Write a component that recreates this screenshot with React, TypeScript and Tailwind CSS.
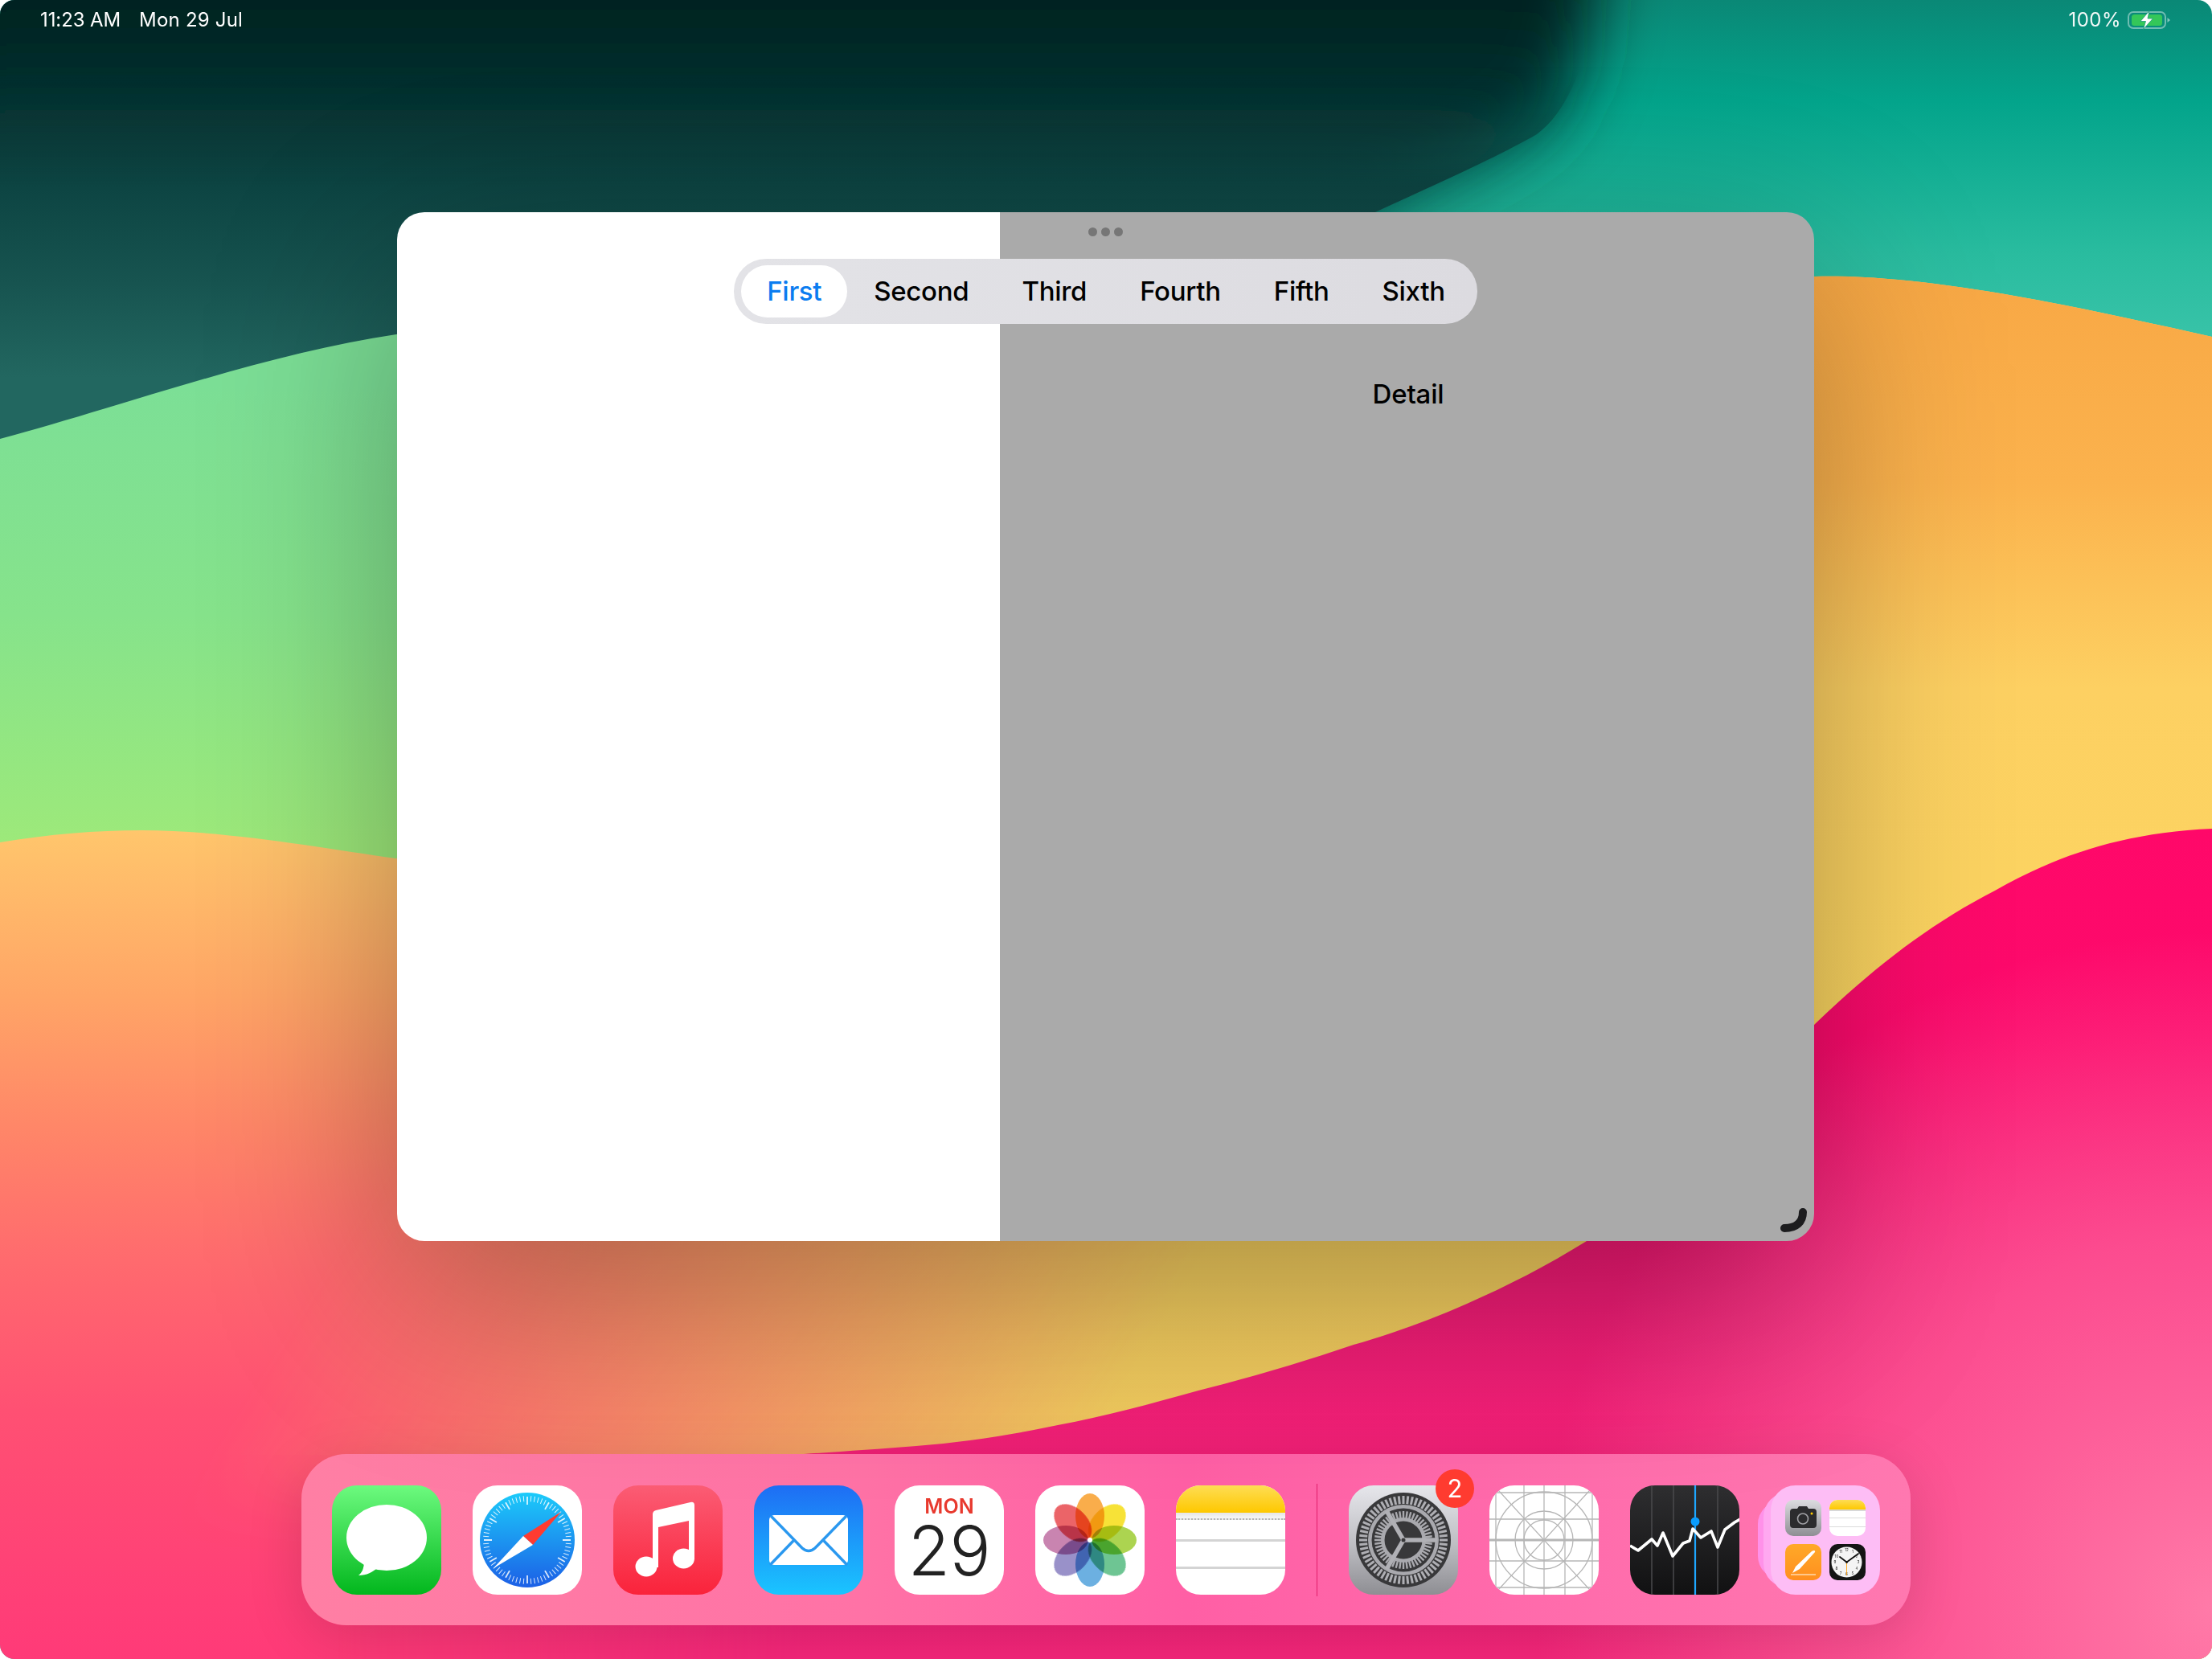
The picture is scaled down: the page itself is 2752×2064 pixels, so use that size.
import type { ReactNode } from "react";

const font = "font-['Inter','Noto_Sans',sans-serif]";
const tabs = ["First", "Second", "Third", "Fourth", "Fifth", "Sixth"];

const darkShape = "M-100 -100H1995C1988 40 1962 130 1912 167C1860 197 1780 232 1711 264L1500 500L-100 700Z";
const hillShape =
  "M0 1048C60 1038 120 1033 176 1033C280 1033 400 1055 493 1068L1500 700L2000 400L2258 344C2400 340 2600 385 2752 419V2064H0Z";
const pinkShape =
  "M2752 1031C2640 1036 2560 1064 2482 1108C2400 1150 2330 1205 2258 1274C2170 1380 2060 1490 1974 1544C1924 1575 1875 1600 1825 1622C1780 1642 1730 1660 1684 1673C1620 1695 1555 1714 1491 1730C1430 1747 1375 1762 1316 1773C1260 1785 1200 1794 1140 1799C1090 1803 1045 1806 1000 1809C800 1830 600 1850 400 1900V2064H2752Z";

function Wallpaper() {
  return (
    <svg className="absolute inset-0" width="2752" height="2064" viewBox="0 0 2752 2064">
      <defs>
        <linearGradient id="teal" x1="0" y1="0" x2="0" y2="420" gradientUnits="userSpaceOnUse">
          <stop offset="0" stopColor="#0a8876" />
          <stop offset="0.3" stopColor="#03a48b" />
          <stop offset="0.75" stopColor="#29bc9f" />
          <stop offset="1" stopColor="#38c3a8" />
        </linearGradient>
        <linearGradient id="dark" x1="0" y1="0" x2="0" y2="470" gradientUnits="userSpaceOnUse">
          <stop offset="0" stopColor="#02211f" />
          <stop offset="0.25" stopColor="#05302f" />
          <stop offset="0.5" stopColor="#0d4543" />
          <stop offset="0.75" stopColor="#175450" />
          <stop offset="1" stopColor="#226760" />
        </linearGradient>
        <linearGradient id="darkFade" x1="0" y1="90" x2="0" y2="230" gradientUnits="userSpaceOnUse">
          <stop offset="0" stopColor="#000" />
          <stop offset="1" stopColor="#fff" />
        </linearGradient>
        <mask id="sharpEdge" maskUnits="userSpaceOnUse" x="0" y="0" width="2752" height="700">
          <rect width="2752" height="700" fill="url(#darkFade)" />
        </mask>
        <filter id="soft" x="-10%" y="-10%" width="120%" height="120%">
          <feGaussianBlur stdDeviation="40" />
        </filter>
        <linearGradient id="green" x1="0" y1="480" x2="0" y2="1050" gradientUnits="userSpaceOnUse">
          <stop offset="0" stopColor="#7cdf96" />
          <stop offset="0.5" stopColor="#86e38b" />
          <stop offset="1" stopColor="#9de97a" />
        </linearGradient>
        <linearGradient id="hillLeft" x1="0" y1="1033" x2="0" y2="2064" gradientUnits="userSpaceOnUse">
          <stop offset="0" stopColor="#ffc66c" />
          <stop offset="0.2" stopColor="#ffa566" />
          <stop offset="0.36" stopColor="#ff8668" />
          <stop offset="0.52" stopColor="#ff6a6e" />
          <stop offset="0.7" stopColor="#ff5073" />
          <stop offset="1" stopColor="#ff3a78" />
        </linearGradient>
        <linearGradient id="hillRight" x1="0" y1="344" x2="0" y2="1850" gradientUnits="userSpaceOnUse">
          <stop offset="0" stopColor="#f8a845" />
          <stop offset="0.17" stopColor="#fbb24d" />
          <stop offset="0.34" stopColor="#fdd062" />
          <stop offset="0.65" stopColor="#fbd660" />
          <stop offset="1" stopColor="#f0c85e" />
        </linearGradient>
        <linearGradient id="hillFade" x1="440" y1="1280" x2="1330" y2="1830" gradientUnits="userSpaceOnUse">
          <stop offset="0.12" stopColor="#000" />
          <stop offset="1" stopColor="#fff" />
        </linearGradient>
        <mask id="hillMask" maskUnits="userSpaceOnUse" x="0" y="0" width="2752" height="2064">
          <rect width="2752" height="2064" fill="url(#hillFade)" />
          <rect x="-200" y="1850" width="1250" height="400" fill="#000" filter="url(#soft)" />
        </mask>
        <linearGradient id="pink" x1="0" y1="1031" x2="0" y2="2064" gradientUnits="userSpaceOnUse">
          <stop offset="0" stopColor="#ff0869" />
          <stop offset="0.25" stopColor="#fc0a6c" />
          <stop offset="0.55" stopColor="#f31c76" />
          <stop offset="1" stopColor="#f5267a" />
        </linearGradient>
        <radialGradient id="pinkGlow" cx="2752" cy="2000" r="840" gradientUnits="userSpaceOnUse">
          <stop offset="0" stopColor="#ff7aa8" />
          <stop offset="0.55" stopColor="#ff5c98" stopOpacity="0.75" />
          <stop offset="1" stopColor="#ff5c98" stopOpacity="0" />
        </radialGradient>
        <linearGradient id="pinkFade" x1="420" y1="0" x2="1000" y2="0" gradientUnits="userSpaceOnUse">
          <stop offset="0" stopColor="#000" />
          <stop offset="1" stopColor="#fff" />
        </linearGradient>
        <mask id="pinkMask" maskUnits="userSpaceOnUse" x="0" y="0" width="2752" height="2064">
          <rect width="2752" height="2064" fill="url(#pinkFade)" />
        </mask>
      </defs>
      <rect width="2752" height="2064" fill="url(#teal)" />
      <path d={darkShape} fill="url(#dark)" filter="url(#soft)" />
      <path d={darkShape} fill="url(#dark)" mask="url(#sharpEdge)" />
      <path d="M0 546C150 506 330 440 493 416C800 380 1300 340 1700 320V1300H0Z" fill="url(#green)" />
      <path d={hillShape} fill="url(#hillLeft)" />
      <path d={hillShape} fill="url(#hillRight)" mask="url(#hillMask)" />
      <g mask="url(#pinkMask)">
        <path d={pinkShape} fill="url(#pink)" />
        <path d={pinkShape} fill="url(#pinkGlow)" />
      </g>
    </svg>
  );
}

function StatusBar() {
  return (
    <div className={`flex items-center justify-between h-[46px] pt-[3px] pl-[50px] pr-[51px] text-[24px] leading-[43px] text-white ${font}`}>
      <div className="flex gap-[23px]">
        <span className="tracking-[-0.1px]">11:23 AM</span>
        <span className="tracking-[0.2px]">Mon 29 Jul</span>
      </div>
      <div className="flex items-center gap-[8px]">
        <span className="tracking-[0.5px] opacity-95">100%</span>
        <svg width="54" height="24" viewBox="0 0 54 24">
          <rect x="1" y="2" width="46" height="20" rx="6" fill="none" stroke="#fff" strokeOpacity="0.42" strokeWidth="2" />
          <rect x="5" y="5" width="38" height="14" rx="3.5" fill="#34c759" />
          <path d="M49.5 9L53 12L49.5 15Z" fill="#fff" fillOpacity="0.5" />
          <path d="M27 0.5L16 13.5H22.5L19.5 23.5L31.5 10H25Z" fill="#fff" stroke="#1d9a7a" strokeWidth="0.8" />
        </svg>
      </div>
    </div>
  );
}

function AppWindow() {
  return (
    <div className="relative flex ml-[494px] mt-[218px] w-[1763px] h-[1280px] rounded-[34px] overflow-hidden shadow-[0_70px_240px_rgba(0,0,0,0.32)]">
      <div className="w-[750px] bg-white" />
      <div className="flex-1 flex justify-center bg-[#aaaaaa] pt-[204px] pl-[3px]">
        <span className={`text-[33px] leading-[44px] tracking-[-0.2px] font-medium text-black ${font}`}>Detail</span>
      </div>
      <div className="absolute inset-x-0 top-[19px] flex justify-center gap-[5px]">
        <div className="w-[11px] h-[11px] rounded-full bg-[#767676]" />
        <div className="w-[11px] h-[11px] rounded-full bg-[#767676]" />
        <div className="w-[11px] h-[11px] rounded-full bg-[#767676]" />
      </div>
      <div className="absolute inset-x-0 top-[58px] flex justify-center">
        <div className={`flex items-center h-[81px] pl-[9px] pr-[7px] rounded-[40px] bg-[linear-gradient(90deg,#e3e3e7,#dcdbe0)] ${font}`}>
          {tabs.map((t, i) => (
            <div
              key={t}
              className={
                i === 0
                  ? "h-[65px] px-[32px] flex items-center rounded-[33px] bg-white text-[33px] tracking-[-0.3px] font-medium text-[#0a7cf0]"
                  : "h-[65px] px-[33px] flex items-center text-[33px] tracking-[-0.3px] font-medium text-black"
              }
            >
              {t}
            </div>
          ))}
        </div>
      </div>
      <svg className="absolute right-0 bottom-0" width="50" height="50" viewBox="0 0 50 50">
        <path d="M36 14C36 26 28 34 13 34" fill="none" stroke="#1c1c1e" strokeWidth="10" strokeLinecap="round" />
      </svg>
    </div>
  );
}

function Icon({ className, children }: { className: string; children: ReactNode }) {
  return <div className={`relative w-[136px] h-[136px] shrink-0 rounded-[31px] overflow-hidden ${className}`}>{children}</div>;
}

function Messages() {
  return (
    <Icon className="bg-[linear-gradient(180deg,#6dfa7f,#02b71d)]">
      <svg width="136" height="136" viewBox="0 0 136 136">
        <ellipse cx="68" cy="65" rx="50" ry="41" fill="#fff" />
        <path d="M40 94C40 104 37 109 33 112C43 112 51 108 57 102Z" fill="#fff" />
      </svg>
    </Icon>
  );
}

function Safari() {
  const ticks = Array.from({ length: 72 }, (_, i) => i * 5);
  return (
    <Icon className="bg-white">
      <svg width="136" height="136" viewBox="0 0 136 136">
        <defs>
          <linearGradient id="safariBg" x1="0" y1="0" x2="0" y2="1">
            <stop offset="0" stopColor="#1ccbfa" />
            <stop offset="1" stopColor="#1c5fe6" />
          </linearGradient>
        </defs>
        <circle cx="68" cy="68" r="59" fill="url(#safariBg)" />
        {ticks.map((a) => (
          <line
            key={a}
            x1="68"
            y1={a % 30 === 0 ? 14 : 13}
            x2="68"
            y2={a % 30 === 0 ? 24 : 20}
            stroke="#fff"
            strokeOpacity="0.85"
            strokeWidth={a % 30 === 0 ? 1.8 : 1}
            transform={`rotate(${a} 68 68)`}
          />
        ))}
        <path d="M110 33L75 74L63 63Z" fill="#ff3b30" />
        <path d="M26 103L63 63L75 74Z" fill="#fff" />
      </svg>
    </Icon>
  );
}

function Music() {
  return (
    <Icon className="bg-[linear-gradient(180deg,#fb5c74,#fa233b)]">
      <svg width="136" height="136" viewBox="0 0 136 136" fill="#fff">
        <path d="M49 36Q49 32 53 31L96 21Q101 20 101 25V92H94V44L56 52V102H49Z" />
        <ellipse cx="41" cy="101" rx="13.5" ry="12.5" />
        <ellipse cx="87.5" cy="91" rx="13.5" ry="12.5" />
      </svg>
    </Icon>
  );
}

function Mail() {
  return (
    <Icon className="bg-[linear-gradient(180deg,#1e6df4,#1ac5ff)]">
      <svg width="136" height="136" viewBox="0 0 136 136">
        <rect x="19" y="37" width="98" height="62" rx="6" fill="#fff" />
        <path
          d="M21 38L60 78Q68 85 76 78L115 38M49 69L20 99M87 69L116 99"
          fill="none"
          stroke="#2a98ef"
          strokeWidth="3.4"
        />
      </svg>
    </Icon>
  );
}

function Calendar() {
  return (
    <Icon className={`flex flex-col items-center bg-white ${font}`}>
      <span className="mt-[11px] text-[25px] leading-[30px] font-semibold text-[#e8392e]">MON</span>
      <span className="mt-[5px] text-[85px] leading-[72px] font-light tracking-[-0.5px] text-[#222222]">29</span>
    </Icon>
  );
}

function Photos() {
  const petals = ["#f8a63c", "#f6e026", "#a5d041", "#62c08a", "#5fa9de", "#9088c4", "#c47aa9", "#e9575b"];
  return (
    <Icon className="bg-white">
      <svg width="136" height="136" viewBox="0 0 136 136">
        {petals.map((c, i) => (
          <ellipse
            key={c}
            cx="68"
            cy="38"
            rx="18"
            ry="28"
            fill={c}
            fillOpacity="0.92"
            className="mix-blend-multiply"
            transform={`rotate(${i * 45} 68 68)`}
          />
        ))}
        <circle cx="68" cy="68" r="3" fill="#fff" />
      </svg>
    </Icon>
  );
}

function Notes() {
  return (
    <Icon className="flex flex-col bg-white">
      <div className="h-[34px] bg-[linear-gradient(180deg,#fedd55,#fec800)]" />
      <div className="h-[9px] bg-[linear-gradient(180deg,#e6e6e6,#f6f6f6)] border-b-[2px] border-dotted border-[#b5b5b5]" />
      <div className="mt-[24px] h-[3px] bg-[#d4d4d4]" />
      <div className="mt-[31px] h-[3px] bg-[#d4d4d4]" />
    </Icon>
  );
}

function Settings() {
  const outer = Array.from({ length: 60 }, (_, i) => i * 6);
  const inner = Array.from({ length: 48 }, (_, i) => i * 7.5);
  return (
    <div className="relative shrink-0">
      <Icon className="bg-[linear-gradient(180deg,#e6e6eb,#bdbdc2_55%,#8e8e93)]">
        <svg width="136" height="136" viewBox="0 0 136 136">
          <circle cx="68" cy="68" r="59" fill="#38383a" />
          {outer.map((a) => (
            <line key={a} x1="68" y1="13" x2="68" y2="23" stroke="#aeaeb3" strokeWidth="3" transform={`rotate(${a} 68 68)`} />
          ))}
          <circle cx="68" cy="68" r="44" fill="#a9a9ae" />
          <circle cx="68" cy="68" r="39.5" fill="#38383a" />
          {inner.map((a) => (
            <line key={a} x1="68" y1="32" x2="68" y2="41" stroke="#a9a9ae" strokeWidth="2.4" transform={`rotate(${a} 68 68)`} />
          ))}
          <circle cx="68" cy="68" r="28" fill="#a9a9ae" />
          <circle cx="68" cy="68" r="23.5" fill="#38383a" />
          {[90, 210, 330].map((a) => (
            <line key={a} x1="68" y1="68" x2="68" y2="26" stroke="#b0b0b5" strokeWidth="5.5" transform={`rotate(${a} 68 68)`} />
          ))}
          <circle cx="68" cy="68" r="2.5" fill="#38383a" />
        </svg>
      </Icon>
      <div className={`absolute -top-[20px] -right-[20px] flex items-center justify-center w-[48px] h-[48px] rounded-full bg-[#ff3b30] text-[31px] leading-none text-white ${font}`}>
        2
      </div>
    </div>
  );
}

function Blueprint() {
  return (
    <Icon className="bg-white">
      <svg width="136" height="136" viewBox="0 0 136 136" fill="none" stroke="#b6b6b6" strokeWidth="1.3">
        <path d="M0 9H136M0 42H136M0 94H136M0 127H136M8 0V136M43 0V136M68 0V136M94 0V136M128 0V136" />
        <path d="M0 68H136" strokeWidth="3" />
        <path d="M0 -6L136 142M136 -6L0 142" />
        <circle cx="68" cy="68" r="60" />
        <circle cx="68" cy="68" r="36" />
        <circle cx="68" cy="68" r="25" />
      </svg>
    </Icon>
  );
}

function Stocks() {
  return (
    <Icon className="bg-[linear-gradient(180deg,#2e2e30,#111112)]">
      <svg width="136" height="136" viewBox="0 0 136 136">
        <path d="M27 0V136M54 0V136M109 0V136" stroke="#4a4a4c" strokeWidth="1.5" />
        <path d="M81 0V136" stroke="#1ea7ff" strokeWidth="2.2" />
        <polyline
          points="0,75 10,81 27,67 34,75 41,59 53,88 66,72 74,69 78,54 88,65 101,57 109,77 118,55 130,46 137,42"
          fill="none"
          stroke="#fff"
          strokeWidth="3.6"
          strokeLinejoin="round"
        />
        <circle cx="81" cy="45" r="5.5" fill="#0a9dff" />
      </svg>
    </Icon>
  );
}

function Folder() {
  return (
    <div className="relative shrink-0 w-[136px] h-[136px]">
      <div className="absolute -left-[16px] top-[20px] w-[60px] h-[96px] rounded-[28px] bg-[#ff91e9]" />
      <div className="absolute -left-[9px] top-[9px] w-[60px] h-[118px] rounded-[30px] bg-[#ffa8f0]" />
      <div className="relative grid grid-cols-2 gap-[10px] p-[18px] w-[136px] h-[136px] rounded-[31px] bg-[#fdbdf5]">
        <div className="w-[45px] h-[45px] rounded-[10px] overflow-hidden bg-[linear-gradient(180deg,#dcdce0,#8e8e93)]">
          <svg width="45" height="45" viewBox="0 0 45 45">
            <path d="M10 11H15L17 8H27L29 11H35Q39 11 39 15V31Q39 35 35 35H10Q6 35 6 31V15Q6 11 10 11Z" fill="#2c2c2e" />
            <circle cx="22" cy="23.5" r="6.5" fill="none" stroke="#a0a0a4" strokeWidth="1.6" />
            <circle cx="33" cy="17" r="1.5" fill="#ffcc00" />
          </svg>
        </div>
        <div className="flex flex-col w-[45px] h-[45px] rounded-[10px] overflow-hidden bg-white">
          <div className="h-[12px] bg-[linear-gradient(180deg,#fedd55,#fec800)]" />
          <div className="h-[2px] bg-[#d8d8d8]" />
          <div className="mt-[8px] h-[1px] bg-[#dcdcdc]" />
          <div className="mt-[10px] h-[1px] bg-[#dcdcdc]" />
        </div>
        <div className="w-[45px] h-[45px] rounded-[10px] overflow-hidden bg-[linear-gradient(180deg,#ffa928,#ff8f1f)]">
          <svg width="45" height="45" viewBox="0 0 45 45">
            <path d="M36 8C37 8 37.5 9 37 10L18 31L9 36L13 28L33 9Q35 8 36 8Z" fill="#fff" />
            <path d="M7 38H38" stroke="#ffd9ae" strokeWidth="1.4" />
          </svg>
        </div>
        <div className="w-[45px] h-[45px] rounded-[10px] overflow-hidden bg-[#141414]">
          <svg width="45" height="45" viewBox="0 0 45 45">
            <circle cx="21.5" cy="22.5" r="19" fill="#f4f4f4" />
            {[
              ["12", 21.5, 9],
              ["3", 36, 24],
              ["6", 21.5, 39],
              ["9", 7, 24],
              ["1", 29, 11],
              ["2", 34, 16.5],
              ["4", 34, 32],
              ["5", 29, 37.5],
              ["7", 14, 37.5],
              ["8", 9, 32],
              ["10", 9, 16.5],
              ["11", 14, 11],
            ].map(([n, x, y]) => (
              <text key={n} x={x} y={y} fontSize="4.6" textAnchor="middle" fontFamily="Inter, sans-serif" fill="#222">
                {n}
              </text>
            ))}
            <path d="M21.5 22.5L13 16M21.5 22.5L36 12" stroke="#111" strokeWidth="1.8" strokeLinecap="round" />
            <path d="M21.5 22.5V39" stroke="#ff9f0a" strokeWidth="0.9" />
            <circle cx="21.5" cy="22.5" r="1.4" fill="#111" />
          </svg>
        </div>
      </div>
    </div>
  );
}

function Dock() {
  return (
    <div className="mt-auto mb-[42px] mx-[375px] flex items-center gap-[39px] h-[213px] px-[38px] rounded-[56px] bg-[linear-gradient(90deg,#ff7fa4,#ff72a6_35%,#ff5fa5_55%,#ff6aab_75%,#ff78b0)] shadow-[0_16px_70px_rgba(0,0,0,0.14)]">
      <Messages />
      <Safari />
      <Music />
      <Mail />
      <Calendar />
      <Photos />
      <Notes />
      <div className="w-[2px] h-[140px] bg-[#e01e6a]" />
      <Settings />
      <Blueprint />
      <Stocks />
      <Folder />
    </div>
  );
}

export default function App() {
  return (
    <div className="relative w-[2752px] h-[2064px] rounded-[18px] overflow-hidden">
      <Wallpaper />
      <div className="relative flex flex-col h-full">
        <StatusBar />
        <AppWindow />
        <Dock />
      </div>
    </div>
  );
}
